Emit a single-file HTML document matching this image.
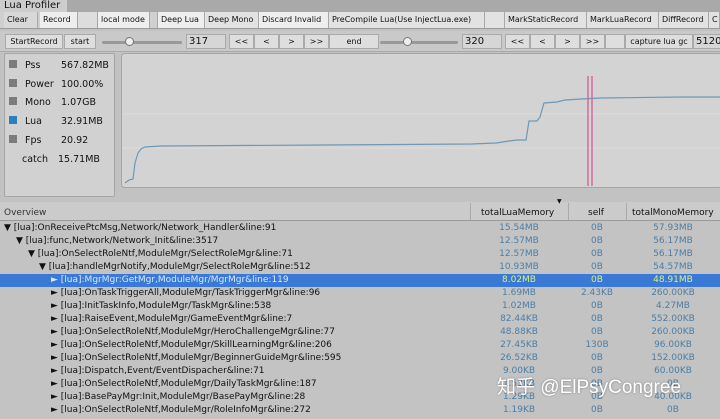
<!DOCTYPE html><html><head><style>
*{margin:0;padding:0;box-sizing:border-box}
body{width:720px;height:419px;overflow:hidden;background:#c2c2c2;font-family:"DejaVu Sans","Liberation Sans",sans-serif;font-size:9px;color:#111;position:relative}
.a{position:absolute;white-space:nowrap}
.tb{position:absolute;top:12px;height:16px;background:#e2e2e2;border-right:1px solid #a8a8a8;line-height:15px;padding-left:3px;white-space:nowrap;overflow:hidden;font-size:8px}
.b2{position:absolute;top:34px;height:15px;background:#dedede;border:1px solid #aaa;line-height:13px;text-align:center;font-size:8px;white-space:nowrap;overflow:hidden}
.row{position:absolute;left:0;width:720px;height:13px;line-height:13px}
.row span{position:absolute;white-space:nowrap}
.v{color:#4c7ea6;text-align:center}
</style></head><body>
<div class="a" style="left:0;top:0;width:720px;height:12px;background:#a9a9a9"></div>
<div class="a" style="left:0;top:0;width:67px;height:12px;background:#cdcdcd;line-height:12px;padding-left:4px;font-size:10px">Lua Profiler</div>
<div class="a" style="left:0;top:12px;width:720px;height:17px;background:#cfcfcf;border-bottom:1px solid #999"></div>
<div class="tb" style="left:4px;width:34px;background:#d8d8d8">Clear</div>
<div class="tb" style="left:40px;width:38px;background:#eee">Record</div>
<div class="tb" style="left:78px;width:20px;background:#ddd"></div>
<div class="tb" style="left:98px;width:52px;background:#eee">local mode</div>
<div class="tb" style="left:150px;width:8px;background:#d0d0d0"></div>
<div class="tb" style="left:158px;width:47px;background:#eee">Deep Lua</div>
<div class="tb" style="left:205px;width:54px">Deep Mono</div>
<div class="tb" style="left:259px;width:70px;background:#eee">Discard Invalid</div>
<div class="tb" style="left:329px;width:156px">PreCompile Lua(Use InjectLua.exe)</div>
<div class="tb" style="left:485px;width:20px"></div>
<div class="tb" style="left:505px;width:82px">MarkStaticRecord</div>
<div class="tb" style="left:587px;width:72px">MarkLuaRecord</div>
<div class="tb" style="left:659px;width:50px">DiffRecord</div>
<div class="tb" style="left:709px;width:11px">C</div>
<div class="a" style="left:0;top:31px;width:720px;height:21px;background:#c9c9c9;border-bottom:1px solid #aaa"></div>
<div class="b2" style="left:5px;width:58px">StartRecord</div>
<div class="b2" style="left:64px;width:32px">start</div>
<div class="a" style="left:102px;top:41px;width:80px;height:3px;background:#999;border-radius:2px"></div>
<div class="a" style="left:125px;top:37px;width:9px;height:9px;border-radius:50%;background:#eee;border:1px solid #777"></div>
<div class="b2" style="left:186px;width:40px;text-align:left;padding-left:2px;font-size:10px;background:#d6d6d6">317</div>
<div class="b2" style="left:229px;width:25px">&lt;&lt;</div><div class="b2" style="left:254px;width:25px">&lt;</div><div class="b2" style="left:279px;width:25px">&gt;</div><div class="b2" style="left:304px;width:25px">&gt;&gt;</div>
<div class="b2" style="left:329px;width:50px">end</div>
<div class="a" style="left:380px;top:41px;width:78px;height:3px;background:#999;border-radius:2px"></div>
<div class="a" style="left:403px;top:37px;width:9px;height:9px;border-radius:50%;background:#eee;border:1px solid #777"></div>
<div class="b2" style="left:462px;width:40px;text-align:left;padding-left:2px;font-size:10px;background:#d6d6d6">320</div>
<div class="b2" style="left:505px;width:25px">&lt;&lt;</div><div class="b2" style="left:530px;width:25px">&lt;</div><div class="b2" style="left:555px;width:25px">&gt;</div><div class="b2" style="left:580px;width:25px">&gt;&gt;</div>
<div class="b2" style="left:605px;width:20px"></div>
<div class="b2" style="left:625px;width:68px">capture lua gc</div>
<div class="b2" style="left:693px;width:30px;text-align:left;padding-left:2px;font-size:10px;background:#d6d6d6">5120</div>
<div class="a" style="left:4px;top:53px;width:111px;height:144px;background:#d1d1d1;border:1px solid #a5a5a5;border-radius:2px"></div>
<div class="a" style="left:9px;top:57px;font-size:9.5px;line-height:18.7px">
<div><i style="display:inline-block;width:8px;height:8px;background:#7c7c7c;margin-right:8px"></i>Pss<span style="position:absolute;left:52px">567.82MB</span></div>
<div><i style="display:inline-block;width:8px;height:8px;background:#7c7c7c;margin-right:8px"></i>Power<span style="position:absolute;left:52px">100.00%</span></div>
<div><i style="display:inline-block;width:8px;height:8px;background:#7c7c7c;margin-right:8px"></i>Mono<span style="position:absolute;left:52px">1.07GB</span></div>
<div><i style="display:inline-block;width:8px;height:8px;background:#2c7fbf;margin-right:8px"></i>Lua<span style="position:absolute;left:52px">32.91MB</span></div>
<div><i style="display:inline-block;width:8px;height:8px;background:#7c7c7c;margin-right:8px"></i>Fps<span style="position:absolute;left:52px">20.92</span></div>
<div style="padding-left:13px">catch<span style="position:absolute;left:49px">15.71MB</span></div></div>
<svg class="a" style="left:121px;top:53px" width="599" height="135"><rect x="0.5" y="0.5" width="600" height="134" rx="3" fill="#d3d3d3" stroke="#a5a5a5"/>
<line x1="1" y1="61" x2="599" y2="61" stroke="#dcdcdc"/><line x1="1" y1="95" x2="599" y2="95" stroke="#dcdcdc"/>
<polyline fill="none" stroke="#6e98b8" stroke-width="1.2" points="4,130 8,127 12,126 14,110 17,100 20,96 24,94 40,93 200,92 350,91 375,90 388,88 396,87 405,87 408,68 416,68 419,64 423,50 436,49 444,47 460,46 480,45 560,44 599,44"/>
<line x1="467" y1="23" x2="467" y2="133" stroke="#d0699a" stroke-width="1.4"/>
<line x1="471" y1="23" x2="471" y2="133" stroke="#d0699a" stroke-width="1.4"/></svg>
<div class="a" style="left:0;top:202px;width:720px;height:19px;background:#cbcbcb;border-bottom:1px solid #999"></div>
<div class="a" style="left:4px;top:208px;color:#333">Overview</div>
<div class="a" style="left:470px;top:203px;width:1px;height:17px;background:#aaa"></div>
<div class="a" style="left:568px;top:203px;width:1px;height:17px;background:#aaa"></div>
<div class="a" style="left:626px;top:203px;width:1px;height:17px;background:#aaa"></div>
<div class="a" style="left:481px;top:208px">totalLuaMemory</div><div class="a" style="left:557px;top:198px;font-size:6px">▼</div>
<div class="a" style="left:588px;top:208px">self</div><div class="a" style="left:632px;top:208px">totalMonoMemory</div>
<div class="a" style="left:0;top:221px;width:720px;height:198px;background:#c3c3c3"></div>
<div class="row" style="top:222px"><span style="left:4px">▼ [lua]:OnReceivePtcMsg,Network/Network_Handler&amp;line:91</span><span class="v" style="left:470px;width:98px">15.54MB</span><span class="v" style="left:568px;width:58px">0B</span><span class="v" style="left:626px;width:94px">57.93MB</span></div>
<div class="row" style="top:235px"><span style="left:16px">▼ [lua]:func,Network/Network_Init&amp;line:3517</span><span class="v" style="left:470px;width:98px">12.57MB</span><span class="v" style="left:568px;width:58px">0B</span><span class="v" style="left:626px;width:94px">56.17MB</span></div>
<div class="row" style="top:248px"><span style="left:28px">▼ [lua]:OnSelectRoleNtf,ModuleMgr/SelectRoleMgr&amp;line:71</span><span class="v" style="left:470px;width:98px">12.57MB</span><span class="v" style="left:568px;width:58px">0B</span><span class="v" style="left:626px;width:94px">56.17MB</span></div>
<div class="row" style="top:261px"><span style="left:39px">▼ [lua]:handleMgrNotify,ModuleMgr/SelectRoleMgr&amp;line:512</span><span class="v" style="left:470px;width:98px">10.93MB</span><span class="v" style="left:568px;width:58px">0B</span><span class="v" style="left:626px;width:94px">54.57MB</span></div>
<div class="row" style="top:274px;background:#3a79d6;color:#cfe3ff"><span style="left:51px;color:#d6e8ff">► [lua]:MgrMgr:GetMgr,ModuleMgr/MgrMgr&amp;line:119</span><span class="v" style="left:470px;width:98px;color:#d8f08a">8.02MB</span><span class="v" style="left:568px;width:58px;color:#d8f08a">0B</span><span class="v" style="left:626px;width:94px;color:#d8f08a">48.91MB</span></div>
<div class="row" style="top:287px"><span style="left:51px">► [lua]:OnTaskTriggerAll,ModuleMgr/TaskTriggerMgr&amp;line:96</span><span class="v" style="left:470px;width:98px">1.69MB</span><span class="v" style="left:568px;width:58px">2.43KB</span><span class="v" style="left:626px;width:94px">260.00KB</span></div>
<div class="row" style="top:300px"><span style="left:51px">► [lua]:InitTaskInfo,ModuleMgr/TaskMgr&amp;line:538</span><span class="v" style="left:470px;width:98px">1.02MB</span><span class="v" style="left:568px;width:58px">0B</span><span class="v" style="left:626px;width:94px">4.27MB</span></div>
<div class="row" style="top:313px"><span style="left:51px">► [lua]:RaiseEvent,ModuleMgr/GameEventMgr&amp;line:7</span><span class="v" style="left:470px;width:98px">82.44KB</span><span class="v" style="left:568px;width:58px">0B</span><span class="v" style="left:626px;width:94px">552.00KB</span></div>
<div class="row" style="top:326px"><span style="left:51px">► [lua]:OnSelectRoleNtf,ModuleMgr/HeroChallengeMgr&amp;line:77</span><span class="v" style="left:470px;width:98px">48.88KB</span><span class="v" style="left:568px;width:58px">0B</span><span class="v" style="left:626px;width:94px">260.00KB</span></div>
<div class="row" style="top:339px"><span style="left:51px">► [lua]:OnSelectRoleNtf,ModuleMgr/SkillLearningMgr&amp;line:206</span><span class="v" style="left:470px;width:98px">27.45KB</span><span class="v" style="left:568px;width:58px">130B</span><span class="v" style="left:626px;width:94px">96.00KB</span></div>
<div class="row" style="top:352px"><span style="left:51px">► [lua]:OnSelectRoleNtf,ModuleMgr/BeginnerGuideMgr&amp;line:595</span><span class="v" style="left:470px;width:98px">26.52KB</span><span class="v" style="left:568px;width:58px">0B</span><span class="v" style="left:626px;width:94px">152.00KB</span></div>
<div class="row" style="top:365px"><span style="left:51px">► [lua]:Dispatch,Event/EventDispacher&amp;line:71</span><span class="v" style="left:470px;width:98px">9.00KB</span><span class="v" style="left:568px;width:58px">0B</span><span class="v" style="left:626px;width:94px">60.00KB</span></div>
<div class="row" style="top:378px"><span style="left:51px">► [lua]:OnSelectRoleNtf,ModuleMgr/DailyTaskMgr&amp;line:187</span><span class="v" style="left:470px;width:98px">1.53KB</span><span class="v" style="left:568px;width:58px">0B</span><span class="v" style="left:626px;width:94px">0B</span></div>
<div class="row" style="top:391px"><span style="left:51px">► [lua]:BasePayMgr:Init,ModuleMgr/BasePayMgr&amp;line:28</span><span class="v" style="left:470px;width:98px">1.29KB</span><span class="v" style="left:568px;width:58px">0B</span><span class="v" style="left:626px;width:94px">40.00KB</span></div>
<div class="row" style="top:404px"><span style="left:51px">► [lua]:OnSelectRoleNtf,ModuleMgr/RoleInfoMgr&amp;line:272</span><span class="v" style="left:470px;width:98px">1.19KB</span><span class="v" style="left:568px;width:58px">0B</span><span class="v" style="left:626px;width:94px">0B</span></div>
<div class="a" style="left:497px;top:372px;font-family:'Liberation Sans','Noto Sans CJK SC',sans-serif;font-size:19px;color:#fff;text-shadow:0 0 2px rgba(0,0,0,.35)">知乎 @ElPsyCongree</div>
</body></html>
